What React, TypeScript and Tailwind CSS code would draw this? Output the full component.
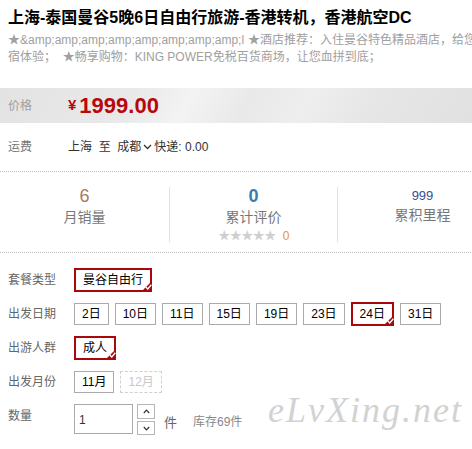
import React from 'react';

const dates = ['2日', '10日', '11日', '15日', '19日', '23日', '24日', '31日'];

const Corner = () => (
    <span className="absolute right-[-2px] bottom-[-2px] w-0 h-0 border-l-[11px] border-l-transparent border-b-[11px] border-b-[#a8080c]">
        <svg className="absolute left-[-7px] top-[3px]" width="7" height="6" viewBox="0 0 7 6">
            <path d="M0.8 3 L2.8 5 L6.3 0.8" fill="none" stroke="#fff" strokeWidth="1.4" />
        </svg>
    </span>
);

const Option: React.FC<{ label: string; selected?: boolean; disabled?: boolean }> = ({ label, selected, disabled }) => {
    if (selected) {
        return (
            <span className="relative flex items-center h-[24px] px-[7px] border-2 border-[#a8080c] text-[12px] text-black">
                {label}
                <Corner />
            </span>
        );
    }
    if (disabled) {
        return (
            <span className="flex items-center h-[22px] px-[7px] border border-dashed border-[#d0d0d0] text-[12px] text-[#c8c8c8]">
                {label}
            </span>
        );
    }
    return (
        <span className="flex items-center h-[22px] px-[7px] border border-[#aaaaaa] text-[12px] text-black">{label}</span>
    );
};

const Row: React.FC<{ label: string; children: React.ReactNode }> = ({ label, children }) => (
    <div className="flex items-center h-[24px]">
        <span className="w-[74px] pl-2 text-[12px] text-[#666]">{label}</span>
        <div className="flex items-center gap-[6px]">{children}</div>
    </div>
);

export default function App() {
    return (
        <div className="relative w-[472px] h-[449px] overflow-hidden bg-white font-[family-name:'Liberation_Sans','Noto_Sans_CJK_SC',sans-serif]">
            <h1 className="pt-[8px] px-2 text-[16px] leading-[20px] font-bold text-black whitespace-nowrap">
                上海-泰国曼谷5晚6日自由行旅游-香港转机，香港航空DC
            </h1>
            <div className="mt-[4px] px-2 text-[12px] leading-[17px] text-[#a0a0a0]">
                <div className="flex whitespace-nowrap">
                    <span className="shrink-0 w-[236px] overflow-hidden">★&amp;amp;amp;amp;amp;amp;amp;amp;amp;lt;lt;</span>
                    <span className="shrink-0 ml-[4px]">★酒店推荐：入住曼谷特色精品酒店，给您最舒适的住</span>
                </div>
                <div className="whitespace-nowrap">宿体验；&nbsp;&nbsp;★畅享购物：KING POWER免税百货商场，让您血拼到底；</div>
            </div>

            <div className="mt-[22px] h-[35px] flex items-center bg-[linear-gradient(120deg,#e3e3e3_0%,#e9e9e9_28%,#f3f3f3_40%,#e9e9e9_52%,#eeeeee_64%,#e6e6e6_78%,#e1e1e1_100%)]">
                <span className="w-[68px] pl-2 text-[12px] text-[#a0a0a0]">价格</span>
                <span className="text-[#b8070d] text-[15px] font-bold mr-[3px]">¥</span>
                <span className="text-[#b8070d] text-[22px] font-bold leading-none">1999.00</span>
            </div>

            <div className="h-[48px] flex items-center text-[12px]">
                <span className="w-[68px] pl-2 text-[#777]">运费</span>
                <span className="text-[#333]">上海&nbsp;&nbsp;至&nbsp;&nbsp;成都</span>
                <svg className="mx-[2px]" width="9" height="6" viewBox="0 0 9 6">
                    <path d="M1 1 L4.5 4.5 L8 1" fill="none" stroke="#333" strokeWidth="1.3" />
                </svg>
                <span className="text-[#333]">快递: 0.00</span>
            </div>

            <div className="w-[507px] h-[82px] border-y border-dotted border-[#bdbdbd] grid grid-cols-3 pt-[15px]">
                <div className="flex flex-col items-center h-[55px]">
                    <span className="text-[18px] leading-[18px] text-[#a77b5e]">6</span>
                    <span className="mt-[2px] text-[14px] leading-[20px] text-[#777]">月销量</span>
                </div>
                <div className="flex flex-col items-center h-[55px] border-x border-[#e2e2e2]">
                    <span className="text-[18px] leading-[18px] font-bold text-[#3b7bb3]">0</span>
                    <span className="mt-[2px] text-[14px] leading-[20px] text-[#777]">累计评价</span>
                    <span className="mt-[1px] text-[12px] leading-[16px] text-[#cfcfcf] tracking-[-0.5px]">
                        ★★★★★<span className="ml-[7px] text-[#e8952f]">0</span>
                    </span>
                </div>
                <div className="flex flex-col items-center h-[55px]">
                    <span className="text-[13px] leading-[18px] text-[#3c4e8e]">999</span>
                    <span className="text-[14px] leading-[20px] text-[#777]">累积里程</span>
                </div>
            </div>

            <div className="pt-[15px] flex flex-col gap-[10px]">
                <Row label="套餐类型">
                    <Option label="曼谷自由行" selected />
                </Row>
                <Row label="出发日期">
                    {dates.map((d) => (
                        <Option key={d} label={d} selected={d === '24日'} />
                    ))}
                </Row>
                <Row label="出游人群">
                    <Option label="成人" selected />
                </Row>
                <Row label="出发月份">
                    <Option label="11月" />
                    <Option label="12月" disabled />
                </Row>
                <div className="flex items-start">
                    <span className="w-[74px] pl-2 pt-[3px] text-[12px] text-[#666]">数量</span>
                    <div className="w-[59px] h-[30px] border border-[#aaa] flex items-end pl-[4px] pb-[4px] text-[12px] text-[#333]">1</div>
                    <div className="ml-[4px] flex flex-col gap-[2px]">
                        <span className="w-[18px] h-[15px] border border-[#b5b5b5] flex items-center justify-center">
                            <svg width="7" height="5" viewBox="0 0 7 5">
                                <path d="M0.8 4 L3.5 1.2 L6.2 4" fill="none" stroke="#333" strokeWidth="1.2" />
                            </svg>
                        </span>
                        <span className="w-[18px] h-[14px] border border-[#b5b5b5] flex items-center justify-center">
                            <svg width="7" height="5" viewBox="0 0 7 5">
                                <path d="M0.8 1 L3.5 3.8 L6.2 1" fill="none" stroke="#333" strokeWidth="1.2" />
                            </svg>
                        </span>
                    </div>
                    <span className="ml-[9px] mt-[9px] text-[13px] text-[#666]">件</span>
                    <span className="ml-[16px] mt-[9px] text-[12px] text-[#888]">库存69件</span>
                </div>
            </div>

            <span className="absolute left-[268px] top-[392px] text-[36px] leading-none italic text-[#d2d2d2] font-[family-name:'Liberation_Serif',serif] tracking-[2px]">
                eLvXing.net
            </span>
        </div>
    );
}
